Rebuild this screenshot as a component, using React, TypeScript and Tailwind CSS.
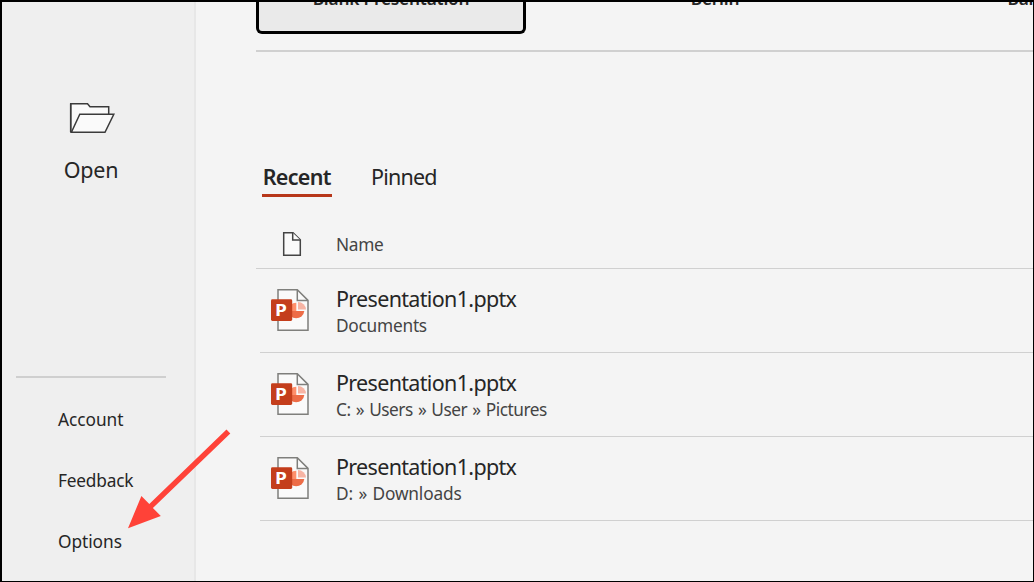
const templates = ["Blank Presentation", "Berlin", "Banded"];

const files = [
  { name: "Presentation1.pptx", path: "Documents", tracking: "tracking-[-0.25px]" },
  { name: "Presentation1.pptx", path: "C: » Users » User » Pictures", tracking: "tracking-[-0.48px] [word-spacing:1.1px]" },
  { name: "Presentation1.pptx", path: "D: » Downloads", tracking: "tracking-[-0.15px] [word-spacing:1.1px]" },
];

const links = [
  { label: "Account", tracking: "tracking-[-0.05px]" },
  { label: "Feedback", tracking: "tracking-[-0.2px]" },
  { label: "Options", tracking: "tracking-[-0.05px]" },
];

function FolderIcon() {
  return (
    <svg className="ml-px" width="46" height="32" viewBox="0 0 46 32" fill="#fafafa" stroke="#3b3b3b" strokeWidth="1.5">
      <path d="M1.7 30.3V1.7H18.5L21 4.7H39.7V12" />
      <path d="M2.4 30.3 10.8 12.3H44.8L36 30.3Z" />
      <path d="M1.7 30.3V1.7" />
    </svg>
  );
}

function PageIcon() {
  return (
    <svg width="20" height="26" viewBox="0 0 20 26" fill="#fafafa" stroke="#444444" strokeWidth="1.5">
      <path d="M1.7 1.7H11L18.3 8.8V24.3H1.7Z" />
      <path d="M10.7 1.7V9H18.3" />
    </svg>
  );
}

function PowerPointIcon() {
  return (
    <svg width="40" height="44" viewBox="0 0 40 44">
      <path d="M8 1.8H27.3L38 12.4V42.3H8Z" fill="#fafafa" stroke="#7f7f7c" strokeWidth="1.5" />
      <path d="M27.3 1.8V12.4H38" fill="none" stroke="#7f7f7c" strokeWidth="1.5" />
      <path d="M26.3 14.7A8.3 8.3 0 0 0 18 23H26.3Z" fill="#ff8f6b" />
      <path d="M18 23H34.3A8.2 8.2 0 0 1 18 23Z" fill="#ed6c47" />
      <path d="M28 14V21.6H36A8 7.8 0 0 0 28 14Z" fill="#f7b4a4" />
      <rect x="1" y="11.3" width="21.2" height="21.6" rx="1.4" fill="#c43e1c" />
      <text transform="translate(5 27.9) scale(1.16 1)" fill="#fff" fontSize="16.5" fontWeight="700" fontFamily="Noto Sans, sans-serif">P</text>
    </svg>
  );
}

export default function App() {
  return (
    <div className="relative flex h-[582px] w-[1034px] overflow-hidden border-t-2 border-r border-b border-l-2 border-black bg-[#f4f4f4] font-['Noto_Sans',sans-serif] text-[#262626]">
      <aside className="flex w-[194px] shrink-0 flex-col border-r-2 border-[#e7e7e7] bg-[#efefef] pl-3.5">
        <div className="flex w-[150px] flex-col items-center pt-[100px]">
          <FolderIcon />
          <span className="mt-[22px] text-[21.5px] leading-7 tracking-[-0.2px]">Open</span>
        </div>
        <div className="mt-48 h-0.5 w-[150px] shrink-0 bg-[#cfcfcf]" />
        <nav className="mt-[30px] flex flex-col gap-[37px] pl-[42px] text-[17.3px] leading-6">
          {links.map((l) => (
            <span key={l.label} className={l.tracking}>{l.label}</span>
          ))}
        </nav>
      </aside>

      <main className="flex min-w-0 flex-1 flex-col overflow-hidden pl-[60px]">
        <div className="flex h-8 shrink-0 gap-[54px]">
          {templates.map((t, i) => (
            <div
              key={t}
              className={
                i === 0
                  ? "w-[270px] shrink-0 rounded-b-md border-3 border-t-0 border-black bg-[#eaeaea] text-center"
                  : "w-[270px] shrink-0 text-center"
              }
            >
              <div className="-mt-[15px] text-[17.3px] leading-6 font-semibold tracking-[-0.2px]">{t}</div>
            </div>
          ))}
        </div>
        <div className="mt-4 h-0.5 shrink-0 bg-[#d0d0d0]" />

        <div className="mt-[111px] flex pl-1.5 text-[21.5px] leading-7">
          <div className="w-[70px] border-b-3 border-[#b7371a] pb-[3px] pl-[0.7px] font-semibold tracking-[-0.7px]">Recent</div>
          <div className="pl-[39px] tracking-[-0.8px]">Pinned</div>
        </div>

        <div className="mt-[34px] flex h-[38px] shrink-0 border-b border-[#d0d0d0] pl-[26px]">
          <PageIcon />
          <span className="pt-0.5 pl-[34px] text-[17.3px] leading-6 tracking-[-0.3px] text-[#444444]">Name</span>
        </div>

        {files.map((f) => (
          <div key={f.path} className="ml-1 flex h-[84px] shrink-0 border-b border-[#d0d0d0] pl-2.5">
            <div className="pt-[19px]">
              <PowerPointIcon />
            </div>
            <div className="flex flex-col pt-4 pl-[26px]">
              <span className="text-[21.5px] leading-7 tracking-[-0.67px]">{f.name}</span>
              <span className={`pt-px text-[17.3px] leading-6 text-[#444444] ${f.tracking}`}>{f.path}</span>
            </div>
          </div>
        ))}
      </main>

      <svg className="pointer-events-none absolute top-[426px] left-[124px]" width="110" height="106" viewBox="126 428 110 106" fill="#ff4238">
        <path d="M226.5 429.5 230.3 433.6 152.9 508.1 160.8 516 128 528.3 141.4 496 149.3 504.1Z" />
      </svg>
    </div>
  );
}
